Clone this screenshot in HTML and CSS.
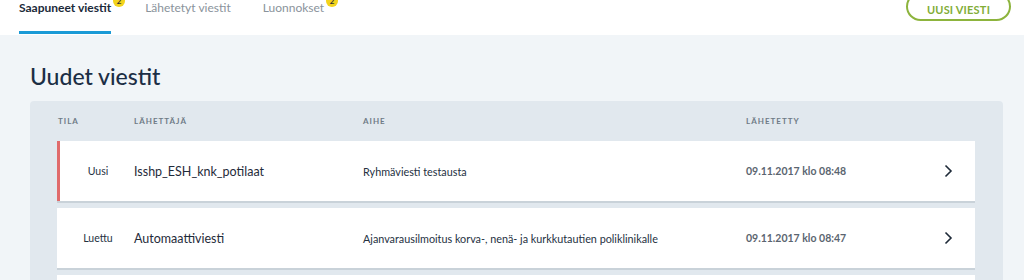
FILE: index.html
```html
<!DOCTYPE html>
<html lang="fi">
<head>
<meta charset="utf-8">
<title>Viestit</title>
<link rel="stylesheet" href="styles.css">
</head>
<body>
<header class="topbar">
  <nav class="tabs">
    <a class="tab active">Saapuneet viestit<span class="badge">2</span></a>
    <a class="tab">Lähetetyt viestit</a>
    <a class="tab">Luonnokset<span class="badge">2</span></a>
  </nav>
  <button class="new-btn">UUSI VIESTI</button>
</header>
<main class="content">
  <h1 class="title">Uudet viestit</h1>
  <section class="panel">
    <div class="thead">
      <span>Tila</span>
      <span>Lähettäjä</span>
      <span>Aihe</span>
      <span>Lähetetty</span>
      <span></span>
    </div>
    <div class="row unread">
      <span class="status">Uusi</span>
      <span class="sender">Isshp_ESH_knk_potilaat</span>
      <span class="subject">Ryhmäviesti testausta</span>
      <span class="date">09.11.2017 klo 08:48</span>
      <span class="chev"><svg width="9" height="14" viewBox="0 0 9 14"><path d="M1.5 1.5 L7 7 L1.5 12.5" fill="none" stroke="#1e2a38" stroke-width="1.6"/></svg></span>
    </div>
    <div class="row">
      <span class="status">Luettu</span>
      <span class="sender">Automaattiviesti</span>
      <span class="subject">Ajanvarausilmoitus korva-, nenä- ja kurkkutautien poliklinikalle</span>
      <span class="date">09.11.2017 klo 08:47</span>
      <span class="chev"><svg width="9" height="14" viewBox="0 0 9 14"><path d="M1.5 1.5 L7 7 L1.5 12.5" fill="none" stroke="#1e2a38" stroke-width="1.6"/></svg></span>
    </div>
    <div class="row"></div>
  </section>
</main>
</body>
</html>
```
FILE: styles.css
```css
* { box-sizing: border-box; }
html, body { margin: 0; padding: 0; }
body {
  background: #f1f5f8;
  font-family: Lato, "Noto Sans", sans-serif;
  color: #25313f;
  overflow: hidden;
  height: 280px;
}
.topbar {
  height: 35px;
  background: #fff;
  display: flex;
  justify-content: space-between;
  align-items: flex-start;
  padding: 0 13px 0 19px;
}
.tabs {
  display: flex;
  height: 35px;
}
.tab {
  position: relative;
  font-size: 12px;
  color: #8a939b;
  padding-top: 1px;
  height: 35px;
  line-height: 14px;
  white-space: nowrap;
}
.tab + .tab { margin-left: 34px; }
.tab:nth-child(3) { margin-left: 32px; }
.tab.active {
  color: #1b2a3a;
  font-weight: 700;
}
.tab.active::after {
  content: "";
  position: absolute;
  left: 0;
  right: 0;
  bottom: 1px;
  height: 3px;
  background: #1a9ad6;
}
.badge {
  position: absolute;
  top: -5px;
  right: -14px;
  width: 12px;
  height: 12px;
  border-radius: 50%;
  background: #f3d31c;
  color: #333;
  font-size: 8px;
  font-weight: 700;
  line-height: 12px;
  text-align: center;
}
.new-btn {
  margin-top: -8px;
  width: 105px;
  height: 29px;
  border: 2px solid #8db43d;
  border-radius: 15px;
  background: #fff;
  color: #82ad36;
  font-family: Lato, "Noto Sans", sans-serif;
  font-weight: 700;
  font-size: 11px;
  letter-spacing: 0.2px;
  padding: 6px 0 0;
}
.content {
  padding: 28px 21px 0 30px;
}
.title {
  margin: 0 0 12px;
  font-size: 23px;
  font-weight: 500;
  line-height: 26px;
  color: #1c2e45;
}
.panel {
  background: #e1e8ee;
  border-radius: 4px 4px 0 0;
  padding: 0 28px 0 27px;
  display: flex;
  flex-direction: column;
  gap: 7px;
}
.thead, .row {
  display: grid;
  grid-template-columns: 74px 229px 383px 1fr 31px;
  align-items: center;
  border-left: 3px solid transparent;
}
.thead {
  height: 40px;
  margin-bottom: -7px;
  font-size: 8px;
  font-weight: 700;
  letter-spacing: 1px;
  text-transform: uppercase;
  color: #6f7b86;
}
.thead span:first-child { margin-left: -2px; }
.row {
  height: 60px;
  background: #fff;
  border-left-color: #fff;
  box-shadow: 0 2px 0 #c9d2d9;
  font-size: 10.8px;
}
.row.unread { border-left-color: #e06b6b; }
.status {
  text-align: center;
  padding-left: 2px;
  font-size: 10.5px;
  color: #25313f;
}
.sender {
  font-size: 12.5px;
  color: #1f2b3a;
}
.subject { color: #25313f; }
.date {
  font-weight: 700;
  font-size: 10.5px;
  color: #5b6570;
}
.chev { display: flex; align-items: center; }
```
